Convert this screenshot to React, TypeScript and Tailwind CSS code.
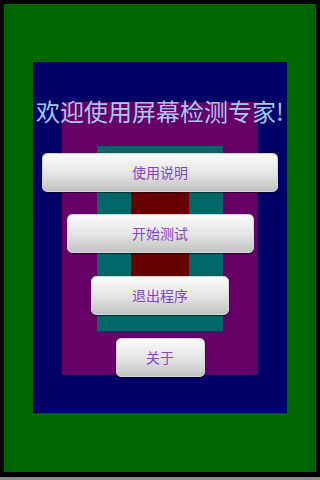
const menu = [
  { label: "使用说明", width: "w-[236px]", gap: "mt-[26px]" },
  { label: "开始测试", width: "w-[187px]", gap: "mt-[22px]" },
  { label: "退出程序", width: "w-[138px]", gap: "mt-[23px]" },
  { label: "关于", width: "w-[89px]", gap: "mt-[23px]" },
];

function MenuButton({ label, className }: { label: string; className: string }) {
  return (
    <button
      className={`${className} h-[39px] rounded-[5px] border border-[#d4d4d4] bg-linear-to-b from-[#fbfbfb] via-[#e6e6e6] to-[#c2c2c2] shadow-[0_1px_1px_rgba(0,0,0,0.55)] text-[14px] text-[#8446c8] flex items-center justify-center`}
    >
      {label}
    </button>
  );
}

export default function App() {
  return (
    <div className="w-[320px] h-[480px] bg-black flex flex-col font-['Noto_Sans_CJK_SC','Noto_Sans',sans-serif]">
      <div className="px-1 pt-1">
        <div className="relative h-[468px] bg-[#006400] pl-[29px] pt-[58px]">
          {/* nested colour frames */}
          <div className="w-[254px] h-[351px] bg-[#000066] pl-[29px] pt-[40px]">
            <div className="w-[196px] h-[273px] bg-[#660066] pl-[35px] pt-[44px]">
              <div className="w-[126px] h-[185px] bg-[#006666] pl-[34px] pt-[44px]">
                <div className="w-[58px] h-[97px] bg-[#660000]" />
              </div>
            </div>
          </div>

          <div className="absolute inset-0 flex flex-col items-center pt-[91px]">
            <h1 className="h-[32px] leading-[32px] text-[24px] text-[#a4c8f4] whitespace-nowrap">
              欢迎使用屏幕检测专家!
            </h1>
            {menu.map((m) => (
              <MenuButton key={m.label} label={m.label} className={`${m.width} ${m.gap}`} />
            ))}
          </div>
        </div>
      </div>
      <div className="h-[5px]" />
      <div className="h-[3px] bg-[#8a8a8a]" />
    </div>
  );
}
